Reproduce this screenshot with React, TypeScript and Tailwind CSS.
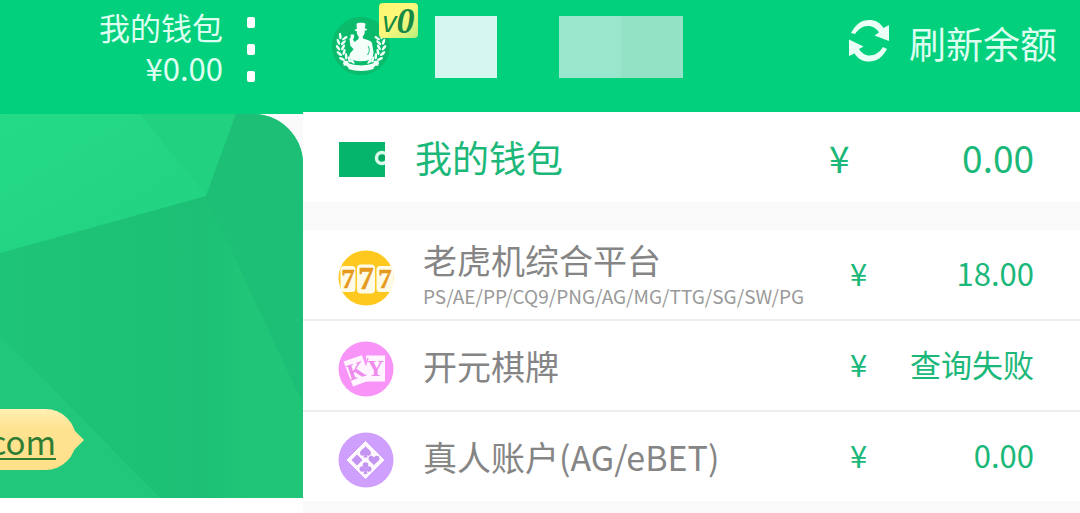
import type { ReactNode } from "react";

function Emblem() {
  const leaves = [0, 1, 2, 3, 4, 5, 6];
  const angles = [206, 191, 176, 161, 146, 131, 118];
  const branch = leaves.map((i) => {
    const a = (angles[i] * Math.PI) / 180;
    const x = 29 + 20.5 * Math.cos(a);
    const y = 29 + 20.5 * Math.sin(a);
    return (
      <g key={i} transform={`translate(${x} ${y}) rotate(${angles[i] - 180})`}>
        <ellipse cx="-2.2" cy="-1.2" rx="1.3" ry="3.2" transform="rotate(-32)" />
        <ellipse cx="2.2" cy="-1.2" rx="1.3" ry="3.2" transform="rotate(32)" />
      </g>
    );
  });
  return (
    <svg viewBox="0 0 58 58" className="size-[58px]" aria-hidden="true">
      <circle cx="29" cy="29" r="29" fill="#0abb6c" />
      <g fill="#f4fffa">
        {branch}
        <g transform="translate(58 0) scale(-1 1)">{branch}</g>
        <path d="M24.500 7c0-1.600 9-1.600 9 0l-.7 4.600 2.200.4v1.300l-2.300.3c.3 3-.6 4.700-2 5.800l.3 2c3 1.200 8 1.600 9 4.600l1.600 9.500-1.200 5.500c-3 4-19 4.500-23.500-.3l1.200-4.500 3.500-4-3.300-3.600-.8-7 1.300-1.200-.2-3 3.600.2-.2 3.300-1 1.500 1.500 2.600 4-3 .2-2.300c-1.300-1.300-2-3-1.800-5.400l-2-.5v-1.300l2-.4z" />
        <path d="M16.500 46c7 3 18 3 25 0v6c-7 2.500-18 2.500-25 0zM10.500 43.500l6 .5v5l-5.500-.5 1.800-2.500zM47.500 43.500l-6 .5v5l5.500-.5-1.800-2.500z" />
      </g>
      <path d="M36 29c2 3 1.500 6-.5 9" stroke="#0abb6c" strokeWidth="1" fill="none" />
      <path d="M16.500 45.500c7 3 18 3 25 0" stroke="#0abb6c" strokeWidth="1" fill="none" />
    </svg>
  );
}

function RefreshIcon() {
  return (
    <svg viewBox="0 0 40 42" className="h-[42px] w-10" aria-hidden="true">
      <g fill="#eafff6">
        <path d="M2 13C7 3.500 13 0 20 0c6.500 0 11 2.500 14.500 8L40 5v16L25.500 15.500l4.500-3C27.500 8.500 24 6 19 6 13.500 6 9.500 9 6 14z" />
        <path d="M38 29C33 38 27 41.500 20 41.500c-6.500 0-11-2.500-14.500-8L0 36V19.500l14.500 7-4.500 2.500c2.500 4 6 6.500 10.500 6.500C26 35.500 30.500 32.500 34 27z" />
      </g>
    </svg>
  );
}

function WalletIcon() {
  return (
    <svg viewBox="0 0 46 35" className="h-[35px] w-[46px]" aria-hidden="true">
      <rect width="46" height="35" fill="#05b56c" />
      <circle cx="43" cy="16" r="5.500" fill="#05a862" stroke="#d9f8ea" strokeWidth="3.500" />
    </svg>
  );
}

function SlotIcon() {
  return (
    <svg viewBox="0 0 56 56" className="size-14" aria-hidden="true">
      <circle cx="28" cy="28" r="27.500" fill="#ffc81e" />
      <g fill="#fffbe6">
        <rect x="2.500" y="16" width="15" height="26" rx="3.500" />
        <rect x="19" y="14.500" width="18" height="29" rx="4" />
        <path d="M42 16h11q2.500 3 2.500 12t-2.500 14H42q-3.500 0-3.500-3.500v-19Q38.500 16 42 16z" />
      </g>
      <g
        fill="#e59a1d"
        stroke="#e59a1d"
        strokeWidth=".5"
        fontFamily="Liberation Serif, serif"
        fontWeight="700"
        textAnchor="middle"
      >
        <text x="10" y="38" fontSize="27">7</text>
        <text x="28" y="39" fontSize="31">7</text>
        <text x="47" y="38" fontSize="27">7</text>
      </g>
    </svg>
  );
}

function CardsIcon() {
  return (
    <svg viewBox="0 0 56 56" className="size-14" aria-hidden="true">
      <circle cx="28" cy="28" r="27.500" fill="#f893f8" />
      <path d="M28 14.500h19v26H28z" fill="#fff4ff" />
      <path d="M5.500 20.500 24.500 14l8 25-17.500 6.500z" fill="#fff4ff" />
      <path d="m24.500 14 3.500 9 2-6" stroke="#f893f8" strokeWidth="1.500" fill="none" />
      <g fill="#ee8bee" fontFamily="Liberation Serif, serif" fontWeight="700" textAnchor="middle" fontSize="23">
        <text transform="translate(20.500 37) rotate(-18)">K</text>
        <text x="37.500" y="35">Y</text>
      </g>
    </svg>
  );
}

function SuitsIcon() {
  return (
    <svg viewBox="0 0 56 56" className="size-14" aria-hidden="true">
      <circle cx="28" cy="28" r="27.500" fill="#cf9ffd" />
      <path d="M27.500 9.500 46 28 27.500 46.500 9 28z" fill="#fff8ff" stroke="#fff8ff" strokeLinejoin="round" />
      <g fill="#c394f2">
        <path d="M27.500 14c1 2.500 5.500 4 5.500 7.200 0 2.500-3 3.300-4.500 1.500l1.200 2.800h-4.400l1.200-2.800c-1.500 1.800-4.500 1-4.500-1.500 0-3.200 4.500-4.700 5.500-7.200z" />
        <path d="M19 23.500 23.500 28 19 32.500 14.500 28z" strokeWidth="1.500" stroke="#c394f2" strokeLinejoin="round" />
        <path d="M36 33.500c-1-2.500-5.500-4-5.500-7.200 0-3 4-3.600 5.500-.8 1.500-2.800 5.500-2.200 5.500.8 0 3.200-4.500 4.700-5.500 7.200z" />
        <circle cx="27.500" cy="33" r="2.800" />
        <circle cx="24.300" cy="37" r="2.800" />
        <circle cx="30.700" cy="37" r="2.800" />
        <path d="m27.500 35 2 7h-4z" />
      </g>
    </svg>
  );
}

function Facets() {
  return (
    <svg
      viewBox="0 0 303 384"
      preserveAspectRatio="none"
      className="absolute inset-0 h-full w-full"
      aria-hidden="true"
    >
      <defs>
        <linearGradient id="bright" x1="0" y1="0" x2="1" y2="1">
          <stop offset="0" stopColor="#24da87" />
          <stop offset="1" stopColor="#22d180" />
        </linearGradient>
        <linearGradient id="seam" x1="0" y1="0" x2="1" y2="0">
          <stop offset="0" stopColor="#1ec478" />
          <stop offset="0.500" stopColor="#1dc176" />
          <stop offset="0.650" stopColor="#1cbf75" />
          <stop offset="0.800" stopColor="#20c578" />
          <stop offset="1" stopColor="#20c578" />
        </linearGradient>
      </defs>
      <rect width="303" height="384" fill="url(#seam)" />
      <path d="M0 221 160 384H0z" fill="#21c77a" />
      <path d="M0 0H236L206 82 0 139z" fill="url(#bright)" />
      <path d="M140 0H236L206 82z" fill="#22d17f" />
      <path d="M236 0H303V290L206 82z" fill="#1cbf75" />
    </svg>
  );
}

type Account = { icon: ReactNode; name: string; note?: string; amount: string };

const accounts: Account[] = [
  { icon: <SlotIcon />, name: "老虎机综合平台", note: "PS/AE/PP/CQ9/PNG/AG/MG/TTG/SG/SW/PG", amount: "18.00" },
  { icon: <CardsIcon />, name: "开元棋牌", amount: "查询失败" },
  { icon: <SuitsIcon />, name: "真人账户(AG/eBET)", amount: "0.00" },
];

function AccountRow({ icon, name, note, amount }: Account) {
  return (
    <li className="flex h-[91px] items-center border-b-2 border-[#eeeeee] pr-[46px] pl-[35px] last:h-[89px] last:border-b-0">
      <span className="shrink-0 pt-1.5">{icon}</span>
      <div className="ml-[29px] flex-1 whitespace-nowrap text-[#858585]">
        <div className="text-[34px] leading-9">{name}</div>
        {note && <div className="pt-1.5 text-[19px] leading-6 text-[#999999]">{note}</div>}
      </div>
      <div className="flex w-[184px] shrink-0 justify-between pb-1 text-[31px] leading-10 text-[#1bb87a]">
        <span>¥</span>
        <span>{amount}</span>
      </div>
    </li>
  );
}

export default function App() {
  return (
    <div
      lang="zh-CN"
      className="grid min-h-screen grid-cols-[303px_1fr] overflow-hidden bg-white font-['Noto_Sans_CJK_SC',sans-serif]"
    >
      <aside>
        <header className="flex h-[114px] items-start justify-end gap-6 bg-[#02d07d] pt-1.5 pr-12 text-right text-[31px] leading-[41px] text-[#dcfff0]">
          <div>
            <div>我的钱包</div>
            <div>¥0.00</div>
          </div>
          <button type="button" aria-label="菜单" className="flex flex-col gap-4 pt-[11px]">
            <span className="h-[11px] w-2 rounded-xs bg-white" />
            <span className="h-[11px] w-2 rounded-xs bg-white" />
            <span className="h-[11px] w-2 rounded-xs bg-white" />
          </button>
        </header>
        <div className="bg-[#fafafa]">
          <div className="relative flex h-96 flex-col justify-end overflow-hidden rounded-tr-[50px] pb-7">
            <Facets />
            <div className="relative flex items-center">
              <div className="flex h-[61px] w-[76px] items-center justify-end rounded-r-full bg-linear-to-b from-[#fff0b4] via-[#ffe391] via-30% to-[#ffe08a] pt-0.5 pr-5">
                <a
                  href="#"
                  className="text-[33px] leading-10 text-[#2f7d32] underline decoration-2 underline-offset-3"
                >
                  com
                </a>
              </div>
              <svg viewBox="0 0 12 24" className="-ml-1 h-6 w-3" aria-hidden="true">
                <path d="M0 0 12 12 0 24z" fill="#ffe290" />
              </svg>
            </div>
          </div>
        </div>
      </aside>

      <main className="bg-[#f9f9f9]">
        <header className="flex h-28 items-start bg-[#02d07d] pr-[23px] pl-[29px]">
          <div className="relative mt-[17px]">
            <Emblem />
            <span className="absolute -top-3.5 left-[47px] flex h-[35px] w-[39px] items-center justify-center rounded-sm bg-linear-to-br from-[#fff66e] via-[#fbf87c] to-[#b9ee7c] font-['Liberation_Serif',serif] text-[36px] leading-none font-bold text-[#168a45] italic">
              <span className="font-['Open_Sans',sans-serif] text-[30px] font-medium">v</span>0
            </span>
          </div>
          <div className="mt-4 ml-[45px] size-[62px] bg-[#d6f7f0]" />
          <div className="mt-4 ml-[62px] flex">
            <div className="size-[62px] bg-[#9ae6cc]" />
            <div className="size-[62px] bg-[#93e2c5]" />
          </div>
          <button
            type="button"
            className="mt-[17px] ml-auto flex items-start gap-5 text-[37px] leading-[52px] whitespace-nowrap text-[#dcfff0]"
          >
            <span className="pt-[3px]">
              <RefreshIcon />
            </span>
            刷新余额
          </button>
        </header>

        <section className="flex h-[90px] items-center bg-white pr-[46px] pl-9 text-[37px] leading-[50px] text-[#1bb87a]">
          <span className="pt-1">
            <WalletIcon />
          </span>
          <h2 className="ml-[30px] flex-1">我的钱包</h2>
          <div className="flex w-[205px] justify-between">
            <span>¥</span>
            <span>0.00</span>
          </div>
        </section>

        <ul className="mt-7 bg-white">
          {accounts.map((account) => (
            <AccountRow key={account.name} {...account} />
          ))}
        </ul>
      </main>
    </div>
  );
}
